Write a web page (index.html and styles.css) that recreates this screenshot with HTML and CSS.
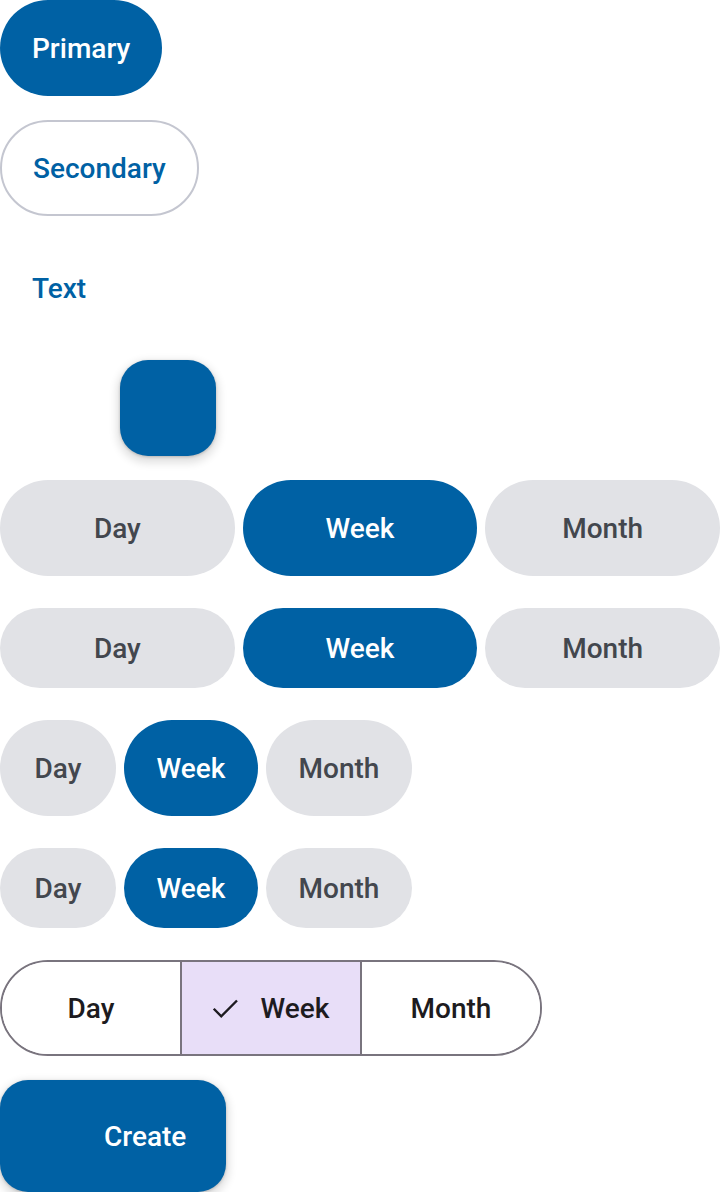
FILE: index.html
```html
<!DOCTYPE html>
<html lang="en">
<head>
    <meta charset="UTF-8">
    <meta name="viewport" content="width=device-width, initial-scale=1.0">
    <link rel="stylesheet" href="styles.css">
</head>
<body>
    <main class="showcase">
        <!-- Basic buttons -->
        <button class="btn btn-filled">Primary</button>
        <button class="btn btn-outlined">Secondary</button>
        <button class="btn btn-text">Text</button>

        <!-- FAB -->
        <div class="fab-row">
            <button class="fab" aria-label="Add"></button>
        </div>

        <!-- Button groups: full width -->
        <div class="group group-wide group-lg">
            <button class="chip">Day</button>
            <button class="chip selected">Week</button>
            <button class="chip">Month</button>
        </div>
        <div class="group group-wide group-md">
            <button class="chip">Day</button>
            <button class="chip selected">Week</button>
            <button class="chip">Month</button>
        </div>

        <!-- Button groups: hug content -->
        <div class="group group-lg">
            <button class="chip chip-day">Day</button>
            <button class="chip chip-week selected">Week</button>
            <button class="chip chip-month">Month</button>
        </div>
        <div class="group group-md">
            <button class="chip chip-day">Day</button>
            <button class="chip chip-week selected">Week</button>
            <button class="chip chip-month">Month</button>
        </div>

        <!-- Segmented button -->
        <div class="segmented">
            <button class="segment">Day</button>
            <button class="segment active">
                <svg class="check" viewBox="0 0 24 24" width="36" height="36" fill="none" stroke="currentColor" stroke-width="1.6">
                    <path d="M4.5 12.5l5 5L20 7"></path>
                </svg>
                Week
            </button>
            <button class="segment">Month</button>
        </div>

        <!-- Extended FAB -->
        <button class="fab-extended">
            <span class="fab-icon"></span>
            Create
        </button>
    </main>
</body>
</html>
```

FILE: styles.css
```css
* {
    box-sizing: border-box;
}

body {
    margin: 0;
    background: #FFFFFF;
    font-family: Roboto, "Noto Sans", sans-serif;
}

button {
    font-family: inherit;
    border: none;
    cursor: pointer;
    padding: 0;
}

.showcase {
    display: flex;
    flex-direction: column;
    align-items: flex-start;
}

.btn {
    height: 96px;
    padding: 0 32px;
    border-radius: 48px;
    font-size: 28px;
    font-weight: 500;
    margin-bottom: 24px;
}

.btn-filled {
    background: #0061A4;
    color: #FFFFFF;
}

.btn-outlined {
    background: #FFFFFF;
    color: #0061A4;
    border: 2px solid #C4C6D0;
    padding: 0 31px;
}

.btn-text {
    background: transparent;
    color: #0061A4;
}

.fab-row {
    display: flex;
    padding-left: 120px;
    margin-bottom: 24px;
}

.fab {
    display: block;
    width: 96px;
    height: 96px;
    border-radius: 28px;
    background: #0061A4;
    box-shadow: 0 4px 8px 3px rgba(0, 0, 0, 0.12), 0 1px 3px rgba(0, 0, 0, 0.2);
}

.group {
    display: flex;
    gap: 8px;
    margin-bottom: 32px;
}

.group-wide {
    width: 100%;
}

.group-wide .chip {
    flex: 1;
}

.group-lg .chip {
    height: 96px;
}

.group-md .chip {
    height: 80px;
}

.chip {
    background: #E1E2E6;
    color: #43474E;
    font-size: 28px;
    font-weight: 500;
    border-radius: 48px;
}

.chip.selected {
    background: #0061A4;
    color: #FFFFFF;
}

.chip-day {
    width: 116px;
}

.chip-week {
    width: 134px;
}

.chip-month {
    width: 146px;
}

.segmented {
    display: flex;
    width: 542px;
    height: 96px;
    border: 2px solid #79747E;
    border-radius: 48px;
    overflow: hidden;
    margin-bottom: 24px;
}

.segment {
    flex: 1;
    display: flex;
    align-items: center;
    justify-content: center;
    gap: 18px;
    background: #FFFFFF;
    color: #1D1B20;
    font-size: 28px;
    font-weight: 500;
}

.segment + .segment {
    border-left: 2px solid #79747E;
}

.segment.active {
    background: #E8DEF8;
}

.check {
    margin-left: -6px;
}

.fab-extended {
    display: flex;
    align-items: center;
    height: 112px;
    padding: 0 40px 0 48px;
    border-radius: 28px;
    background: #0061A4;
    color: #FFFFFF;
    font-size: 28px;
    font-weight: 500;
    box-shadow: 0 4px 8px 3px rgba(0, 0, 0, 0.12), 0 1px 3px rgba(0, 0, 0, 0.2);
}

.fab-icon {
    width: 32px;
    height: 32px;
    margin-right: 24px;
}
```
